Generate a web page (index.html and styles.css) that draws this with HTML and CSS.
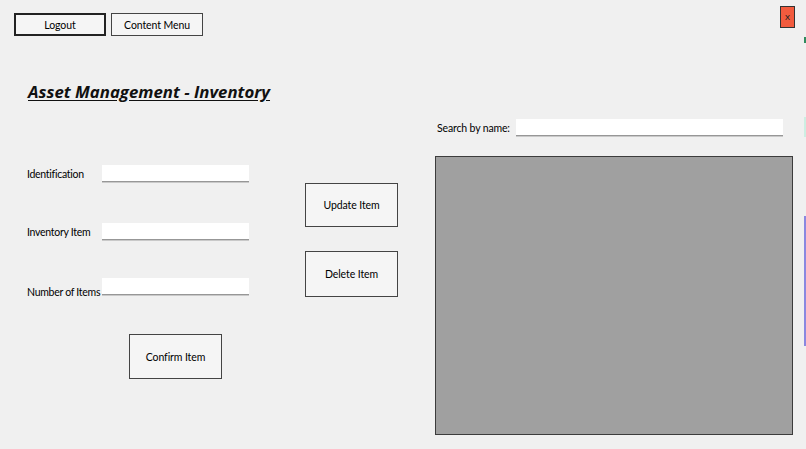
FILE: index.html
```html
<!DOCTYPE html>
<html lang="en">
<head>
<meta charset="utf-8">
<title>Asset Management - Inventory</title>
<link rel="stylesheet" href="styles.css">
</head>
<body>
<div class="window">
  <div class="topbar">
    <button class="btn btn-nav btn-default">Logout</button>
    <button class="btn btn-nav">Content Menu</button>
    <button class="btn-close">x</button>
  </div>

  <div class="title-row">
    <h1 class="title">Asset Management - Inventory</h1>
  </div>

  <div class="main">
    <div class="left">
      <div class="fields">
        <div class="field">
          <label class="field-label">Identification</label>
          <input class="textbox" type="text">
        </div>
        <div class="field field-2">
          <label class="field-label">Inventory Item</label>
          <input class="textbox" type="text">
        </div>
        <div class="field field-3">
          <label class="field-label">Number of Items</label>
          <input class="textbox" type="text">
        </div>
        <button class="btn btn-big btn-confirm">Confirm Item</button>
      </div>
      <div class="actions">
        <button class="btn btn-big btn-update">Update Item</button>
        <button class="btn btn-big btn-delete">Delete Item</button>
      </div>
    </div>

    <div class="right">
      <div class="search">
        <label class="search-label">Search by name:</label>
        <input class="textbox search-box" type="text">
      </div>
      <div class="grid-panel"></div>
    </div>
  </div>

  <div class="edge">
    <span class="edge-dot"></span>
    <span class="edge-teal"></span>
    <span class="edge-purple"></span>
  </div>
</div>
</body>
</html>
```

FILE: styles.css
```css
* { box-sizing: border-box; }

html, body {
  margin: 0;
  padding: 0;
  background: #f0f0f0;
}

body {
  font-family: Lato, "Open Sans", sans-serif;
  font-size: 10.5px;
  letter-spacing: -0.15px;
  color: #000;
}

.window {
  position: relative;
  width: 806px;
  height: 449px;
  overflow: hidden;
  background: #f0f0f0;
}

/* top bar */
.topbar {
  display: flex;
  align-items: flex-start;
  padding: 6px 11px 0 14px;
  gap: 5px;
}

.btn {
  font-family: inherit;
  font-size: 10.5px;
  letter-spacing: -0.1px;
  color: #000;
  background: #f5f5f5;
  border: 1px solid #444;
  border-radius: 0;
  padding: 0;
  margin: 0;
}

.btn-nav {
  width: 92px;
  height: 23px;
  margin-top: 7px;
}

.btn-default {
  box-shadow: inset 0 0 0 1px #222;
  border-color: #222;
}

.btn-close {
  margin-left: auto;
  width: 15px;
  height: 22px;
  padding: 0 0 3px;
  background: #f25b3e;
  border: 1px solid #333;
  border-radius: 0;
  font-family: inherit;
  font-size: 10px;
  color: #222;
}

/* title */
.title-row {
  padding-left: 28px;
  margin-top: 44px;
  height: 24px;
}

.title {
  margin: 0;
  font-family: "Open Sans", sans-serif;
  font-size: 16.8px;
  line-height: 24px;
  font-weight: 700;
  font-style: italic;
  letter-spacing: 0;
  text-decoration: underline;
  text-underline-offset: 2px;
  color: #111;
}

/* main */
.main {
  display: flex;
  margin-top: 6px;
}

.left {
  display: flex;
  width: 435px;
  flex: none;
}

.fields {
  display: flex;
  flex-direction: column;
  padding: 55px 0 0 27px;
  width: 249px;
}

.field {
  display: flex;
  align-items: center;
  height: 17px;
}

.field-2 { margin-top: 41px; }
.field-3 { margin-top: 38px; align-items: flex-end; }

.field-label {
  width: 75px;
  flex: none;
  white-space: nowrap;
  letter-spacing: -0.28px;
}

.field-3 .field-label { margin-bottom: -3px; }

.textbox {
  width: 147px;
  height: 17px;
  border: none;
  border-bottom: 1px solid #979797;
  box-shadow: 0 1px 0 #c9c9c9;
  background: #fff;
  padding: 0 3px;
  font-family: inherit;
  font-size: 10.5px;
  outline: none;
}

.btn-big {
  width: 93px;
  height: 45px;
}

.btn-confirm {
  margin: 39px 0 0 102px;
}

.actions {
  display: flex;
  flex-direction: column;
  padding-top: 73px;
  margin-left: 56px;
}

.btn-update { height: 44px; }
.btn-delete { margin-top: 24px; height: 46px; }

/* right side */
.right {
  display: flex;
  flex-direction: column;
}

.search {
  display: flex;
  align-items: center;
  margin-top: 9px;
  padding-left: 2px;
  height: 17px;
}

.search-label {
  width: 79px;
  flex: none;
  white-space: nowrap;
}

.search-box {
  width: 267px;
}

.grid-panel {
  margin-top: 20px;
  width: 358px;
  height: 279px;
  background: #a0a0a0;
  border: 1px solid #3c3c3c;
}

/* neighbouring window peeking at right edge */
.edge {
  position: absolute;
  top: 0;
  right: 0;
  width: 3px;
  height: 449px;
}

.edge span {
  position: absolute;
  right: 0;
}

.edge-dot {
  top: 37px;
  width: 2px;
  height: 6px;
  background: #2f8a5e;
}

.edge-teal {
  top: 117px;
  width: 2px;
  height: 20px;
  background: #cdeee2;
}

.edge-purple {
  top: 216px;
  width: 2px;
  height: 130px;
  background: #8a88e0;
}
```
